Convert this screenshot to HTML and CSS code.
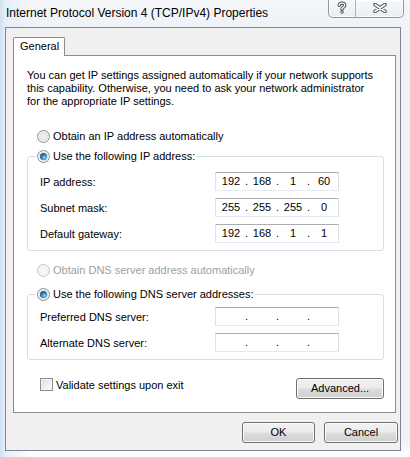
FILE: index.html
```html
<!DOCTYPE html>
<html>
<head>
<meta charset="utf-8">
<link rel="stylesheet" href="styles.css">
</head>
<body>
<div class="window">
  <div class="titlebar">
    <div class="title">Internet Protocol Version 4 (TCP/IPv4) Properties</div>
    <div class="caption-btns">
      <div class="cbtn help">
        <svg width="10" height="13" viewBox="0 0 10 13">
          <path d="M2.3 4.2 C2.3 1.4 7.7 1.4 7.7 4.2 C7.7 6.2 5 6.3 5 8.3" fill="none" stroke="#4a4f57" stroke-width="3.4" stroke-linecap="round"/>
          <circle cx="5" cy="11" r="1.7" fill="#4a4f57"/>
          <path d="M2.3 4.2 C2.3 1.4 7.7 1.4 7.7 4.2 C7.7 6.2 5 6.3 5 8.3" fill="none" stroke="#fff" stroke-width="1.4" stroke-linecap="round"/>
          <circle cx="5" cy="11" r="0.8" fill="#fff"/>
        </svg>
      </div>
      <div class="cbtn close">
        <svg width="14" height="10" viewBox="0 0 14 10">
          <path d="M2 1.5 L12 8.5 M12 1.5 L2 8.5" stroke="#4a4f57" stroke-width="3.6" stroke-linecap="round"/>
          <path d="M2 1.5 L12 8.5 M12 1.5 L2 8.5" stroke="#fff" stroke-width="1.6" stroke-linecap="round"/>
        </svg>
      </div>
    </div>
  </div>
  <div class="client">
    <div class="tabs"><div class="tab">General</div></div>
    <div class="panel">
      <p class="intro">You can get IP settings assigned automatically if your network supports<br>this capability. Otherwise, you need to ask your network administrator<br>for the appropriate IP settings.</p>

      <div class="opt opt-ip-auto"><span class="radio"></span><span>Obtain an IP address automatically</span></div>

      <fieldset class="group group-ip">
        <legend><span class="opt-legend"><span class="radio checked"></span><span>Use the following IP address:</span></span></legend>
        <div class="rows rows-ip">
          <div class="row"><span class="lbl">IP address:</span><div class="ipbox"><span>192</span><i>.</i><span>168</span><i>.</i><span>1</span><i>.</i><span>60</span></div></div>
          <div class="row"><span class="lbl">Subnet mask:</span><div class="ipbox"><span>255</span><i>.</i><span>255</span><i>.</i><span>255</span><i>.</i><span>0</span></div></div>
          <div class="row"><span class="lbl">Default gateway:</span><div class="ipbox"><span>192</span><i>.</i><span>168</span><i>.</i><span>1</span><i>.</i><span>1</span></div></div>
        </div>
      </fieldset>

      <div class="opt opt-dns-auto disabled"><span class="radio"></span><span>Obtain DNS server address automatically</span></div>

      <fieldset class="group group-dns">
        <legend><span class="opt-legend"><span class="radio checked"></span><span>Use the following DNS server addresses:</span></span></legend>
        <div class="rows rows-dns">
          <div class="row"><span class="lbl">Preferred DNS server:</span><div class="ipbox"><span></span><i>.</i><span></span><i>.</i><span></span><i>.</i><span></span></div></div>
          <div class="row"><span class="lbl">Alternate DNS server:</span><div class="ipbox"><span></span><i>.</i><span></span><i>.</i><span></span><i>.</i><span></span></div></div>
        </div>
      </fieldset>

      <div class="bottom-row">
        <div class="check-row"><span class="checkbox"></span><span>Validate settings upon exit</span></div>
        <button class="btn btn-adv">Advanced...</button>
      </div>
    </div>
    <div class="dialog-buttons">
      <button class="btn btn-ok">OK</button>
      <button class="btn btn-cancel">Cancel</button>
    </div>
  </div>
</div>
</body>
</html>
```
FILE: styles.css
```css
* { box-sizing: border-box; }
html, body { margin: 0; padding: 0; }
body {
  width: 410px;
  height: 457px;
  overflow: hidden;
  font-family: "Liberation Sans", Arial, sans-serif;
  font-size: 11px;
  color: #000;
  background: #f7f9fb;
}
.window {
  width: 410px;
  height: 457px;
  display: flex;
  flex-direction: column;
  background:
    linear-gradient(90deg, #cfe1f2 0px, #e6eef6 5px, rgba(244,247,250,0) 30px),
    linear-gradient(180deg, #f4f6f9 0px, #eef2f6 30px, #eef2f6 440px, #fbfcfd 452px);
}
.titlebar {
  height: 27px;
  display: flex;
  align-items: flex-start;
  flex-shrink: 0;
}
.title {
  padding-left: 6px;
  margin-top: 6px;
  font-size: 12px;
  line-height: 15px;
  color: #000;
  white-space: nowrap;
}
.caption-btns {
  margin-left: auto;
  margin-right: 6px;
  height: 18px;
  display: flex;
  border: 1px solid #8e98a4;
  border-top: none;
  border-radius: 0 0 5px 5px;
  background: linear-gradient(180deg, #f6f8fa 0%, #e9eef3 100%);
  box-shadow: inset 0 0 0 1px rgba(255,255,255,0.7);
}
.cbtn {
  display: flex;
  align-items: center;
  justify-content: center;
  padding-bottom: 2px;
}
.help {
  width: 27px;
  border-right: 1px solid #a9b2bd;
}
.close {
  width: 47px;
}
.client {
  margin-left: 5px;
  width: 396px;
  height: 424px;
  flex-shrink: 0;
  border: 1px solid #7c8793;
  background: #f0f0f0;
  padding: 9px 2px 0 7px;
}
.tabs { display: flex; }
.tab {
  width: 52px;
  height: 19px;
  border: 1px solid #898c95;
  border-bottom: none;
  background: #fff;
  position: relative;
  z-index: 1;
  margin-bottom: -1px;
  padding-left: 6px;
  line-height: 17px;
  border-radius: 2px 2px 0 0;
}
.panel {
  width: 383px;
  height: 358px;
  border: 1px solid #898c95;
  background: #fff;
  padding: 0 11px 0 13px;
}
.intro {
  margin: 13px 0 0;
  line-height: 13px;
  white-space: nowrap;
}
.opt, .opt-legend {
  display: flex;
  align-items: center;
  height: 16px;
  gap: 3px;
  white-space: nowrap;
}
.opt { padding-left: 10px; }
.opt-ip-auto { margin-top: 20px; }
.opt-dns-auto { margin-top: 11px; }
.disabled { color: #a0a0a0; }
.radio {
  width: 13px;
  height: 13px;
  border-radius: 50%;
  border: 1px solid #8e8f8f;
  background: radial-gradient(circle at 50% 50%, #f4f4f4 0%, #e2e2e2 55%, #cfcfcf 100%);
  box-shadow: inset 0 0 0 1px #f6f6f6;
  display: flex;
  align-items: center;
  justify-content: center;
  flex-shrink: 0;
}
.radio.checked::after {
  content: "";
  width: 7px;
  height: 7px;
  border-radius: 50%;
  background: radial-gradient(circle at 62% 65%, #9fdcff 0%, #3b8cc9 35%, #1b5486 70%, #123d63 100%);
}
.disabled .radio {
  border-color: #c5c5c5;
  background: #f4f4f4;
  box-shadow: none;
}
.group {
  margin: 4px 0 0;
  padding: 0 0 7px;
  border: 1px solid #d5dfe5;
  border-radius: 3px;
  min-width: 0;
}
.group-dns { margin-top: 8px; }
.group legend {
  padding: 0 1px;
  margin-left: 8px;
}
.rows {
  display: flex;
  flex-direction: column;
  gap: 7px;
  padding-left: 12px;
}
.rows-ip { padding-top: 8px; }
.rows-dns { padding-top: 5px; }
.row {
  display: flex;
  align-items: center;
  height: 19px;
}
.lbl { flex: 1; }
.ipbox {
  width: 124px;
  height: 19px;
  margin-right: 44px;
  border: 1px solid #dbdfe6;
  border-top-color: #abadb3;
  border-left-color: #e2e3ea;
  border-right-color: #dbdfe6;
  border-bottom-color: #e3e9ef;
  display: flex;
  align-items: center;
  padding-left: 1px;
  line-height: 15px;
}
.ipbox span {
  flex: 1;
  text-align: center;
}
.ipbox i {
  font-style: normal;
  width: 3px;
  text-align: center;
}
.bottom-row {
  margin-top: 18px;
  display: flex;
  justify-content: space-between;
  align-items: flex-start;
}
.check-row {
  display: flex;
  align-items: center;
  gap: 3px;
  padding-left: 13px;
  height: 13px;
  margin-top: 0;
}
.checkbox {
  width: 13px;
  height: 13px;
  border: 1px solid #8e8f8f;
  background: linear-gradient(135deg, #dcdcdc 0%, #f2f2f2 60%, #fbfbfb 100%);
  box-shadow: inset 0 0 0 1px #f4f4f4;
}
.btn {
  height: 21px;
  border: 1px solid #707070;
  border-radius: 3px;
  background: linear-gradient(180deg, #f2f2f2 0%, #ebebeb 48%, #dddddd 52%, #cfcfcf 100%);
  box-shadow: inset 0 0 0 1px #fafafa;
  font-family: "Liberation Sans", Arial, sans-serif;
  font-size: 11px;
  color: #000;
  padding: 0;
  line-height: 17px;
}
.btn-adv { width: 88px; }
.dialog-buttons {
  margin-top: 9px;
  display: flex;
  justify-content: flex-end;
  gap: 9px;
}
.btn-ok { width: 73px; }
.btn-cancel { width: 74px; }
```
